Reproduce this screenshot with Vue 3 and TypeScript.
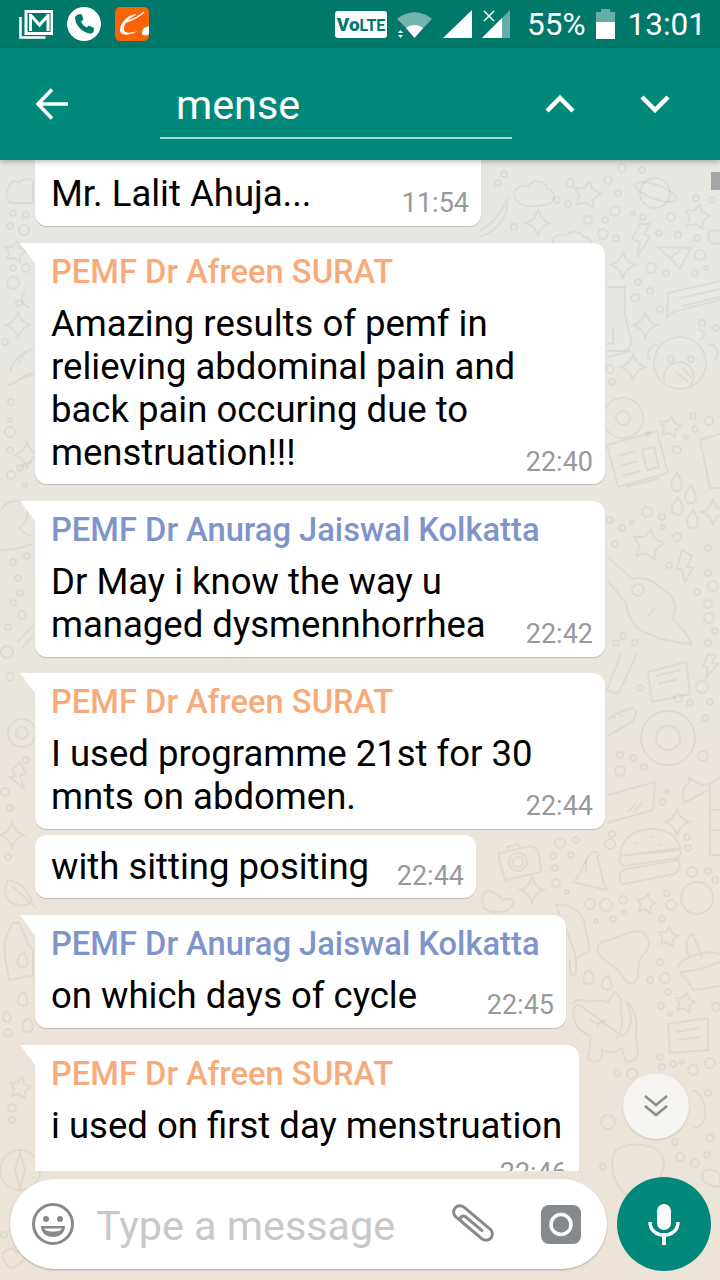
<script setup lang="ts">
interface Message {
  sender?: 'afreen' | 'anurag'
  text: string[]
  time: string
  width: number
  tail?: boolean
  cut?: boolean
  stacked?: boolean
}

const names = {
  afreen: 'PEMF Dr Afreen SURAT',
  anurag: 'PEMF Dr Anurag Jaiswal Kolkatta',
}

const messages: Message[] = [
  { text: ['Mr. Lalit Ahuja...'], time: '11:54', width: 446, cut: true },
  {
    sender: 'afreen',
    text: ['Amazing results of pemf in', 'relieving abdominal pain and', 'back pain occuring due to', 'menstruation!!!'],
    time: '22:40',
    width: 570,
    tail: true,
  },
  {
    sender: 'anurag',
    text: ['Dr May i know the way u', 'managed dysmennhorrhea'],
    time: '22:42',
    width: 570,
    tail: true,
  },
  {
    sender: 'afreen',
    text: ['I used programme 21st for 30', 'mnts on abdomen.'],
    time: '22:44',
    width: 570,
    tail: true,
  },
  { text: ['with sitting positing'], time: '22:44', width: 441 },
  { sender: 'anurag', text: ['on which days of cycle'], time: '22:45', width: 531, tail: true },
  { sender: 'afreen', text: ['i used on first day menstruation'], time: '22:46', width: 544, tail: true, stacked: true },
]

// wallpaper doodles: [x, y, r]
const dots = [
  [622, 168, 4], [642, 170, 3], [504, 174, 3], [498, 183, 3], [570, 183, 4], [608, 180, 4], [618, 193, 3], [557, 200, 3],
  [568, 204, 3], [615, 211, 5], [633, 213, 2], [643, 217, 3], [588, 220, 4], [605, 220, 3], [671, 217, 4], [696, 198, 3],
  [712, 200, 3], [514, 227, 3], [603, 234, 5], [616, 238, 3], [659, 233, 3], [678, 235, 3], [697, 238, 3], [715, 237, 7],
  [700, 255, 5], [651, 268, 5], [666, 273, 3], [695, 273, 3], [706, 268, 2], [638, 282, 3], [650, 291, 3], [635, 298, 4],
  [660, 309, 3], [702, 323, 3], [716, 328, 3], [610, 369, 4], [612, 382, 3], [709, 421, 4], [693, 416, 3], [695, 429, 3],
  [686, 437, 2], [648, 434, 2], [677, 450, 4], [647, 512, 5], [662, 517, 3], [663, 527, 2], [622, 528, 3], [632, 522, 2],
  [610, 520, 3], [615, 544, 3], [677, 537, 4], [708, 548, 3], [669, 565, 3], [708, 573, 3], [713, 586, 5], [697, 592, 3],
  [708, 604, 4], [709, 618, 5], [715, 631, 3], [708, 643, 3], [623, 636, 3], [635, 643, 3], [616, 643, 3], [678, 698, 4],
  [690, 703, 3], [702, 687, 6], [710, 702, 3], [640, 688, 3], [705, 718, 3], [620, 755, 3], [633, 758, 3], [620, 771, 5],
  [644, 767, 3], [663, 802, 3], [667, 792, 2], [703, 756, 5], [560, 843, 5], [576, 840, 3], [610, 844, 5], [612, 834, 3],
  [553, 856, 3], [571, 855, 3], [555, 868, 3], [556, 883, 4], [567, 892, 2], [590, 904, 5], [606, 905, 6], [623, 900, 4],
  [624, 912, 2], [596, 921, 2], [613, 919, 3], [692, 872, 5], [708, 871, 3], [715, 880, 3], [687, 837, 3], [688, 848, 3],
  [667, 893, 3], [671, 905, 5], [662, 919, 3], [660, 962, 3], [650, 980, 3], [665, 978, 5], [668, 992, 3], [661, 1006, 3],
  [670, 1014, 2], [716, 1007, 4], [660, 1057, 3], [662, 1067, 3], [673, 1064, 3], [682, 1062, 2], [710, 1063, 5],
  [693, 1070, 5], [617, 1073, 3], [632, 1074, 5], [708, 1093, 3], [608, 1122, 7], [680, 1157, 4], [695, 1163, 4],
  [707, 1155, 3], [675, 1142, 3], [710, 1138, 4], [603, 1167, 3], [13, 213, 3], [26, 215, 3], [10, 226, 3], [24, 230, 5],
  [13, 268, 3], [26, 268, 4], [13, 283, 6], [19, 303, 3], [5, 342, 3], [11, 402, 3], [10, 420, 2], [10, 432, 5], [10, 450, 3],
  [11, 475, 4], [20, 468, 3], [25, 485, 2], [13, 562, 3], [27, 556, 3], [18, 578, 3], [20, 593, 3], [13, 603, 3], [22, 615, 4],
  [8, 627, 3], [7, 652, 6], [10, 677, 4], [26, 760, 3], [5, 792, 4], [10, 808, 3], [8, 857, 3], [8, 1033, 4], [12, 1108, 4],
  [12, 1120, 3], [4, 1235, 3],
]

const bigStars = [
  [587, 195, 14], [697, 217, 13], [670, 427, 11], [648, 545, 16], [646, 904, 10], [668, 937, 10], [685, 1003, 10], [15, 252, 11], [20, 1088, 11],
]

const sparkles = [
  [538, 223], [623, 265], [645, 325], [633, 367], [713, 512], [677, 822], [532, 890], [18, 325], [27, 455], [12, 835],
]

const shapes = [
  'M516 200c-6-10 5-17 12-13 5-9 18-7 19 2 9 1 9 13 1 15-10 3-27 4-32-4Z',
  'M553 243c0-8 8-10 13-7 4-6 16-5 17 1 6 0 8 4 8 6',
  'M507 198c-4 14-14 26-27 32M507 198c2 18-8 32-27 39',
  'M640 224h10l-6 10 6 3-13 20 3-15-8-3Z',
  'M658 247l33 1-11 21-10-11ZM670 258l11-8',
  'M668 293l52-12M668 293l-1 24 6-5 47-12M680 298l40-9M682 306l38-9',
  'M607 287h18v28l6 24c1 8-4 12-8 12h-16M607 357l24-6M607 344h6v-16',
  'M700 340c8-6 2-12-2-10M650 360c-6-6 2-18 8-14M708 345c6-4 14 8 6 16',
  'M664 380c-2-14 14-22 22-16 8 4 10 14 4 22M676 372l12 10M682 368l10 10',
  'M607 445l50-14 11 42-50 14ZM618 456l18-5M620 466l18-5M622 476l18-5M642 450l12-3 5 20-12 3ZM626 487l34-9',
  'M700 440l20-6M700 440l10 48h10',
  'M673 479c-4 6-2 12 4 12s7-7 0-18ZM687 491c-4 6-2 12 4 12s7-7 0-18ZM674 503c-4 6-2 12 4 12s7-7 0-18ZM689 516c-4 6-2 12 4 12s7-7 0-18Z',
  'M682 550l10 6-5 11 6 1-8 14-3-12-5-2Z',
  'M608 557l24 22c10-4 22 2 30 10 14 8 16 20 10 30 6 4 14 12 20 26-14-4-32-4-40-10-18-4-24-20-26-32l-18-22M655 608l-7 8',
  'M607 690l14-37M618 694l19-40M607 690l11 4',
  'M648 672l38-10 4 32-38 8ZM656 676l24-6M658 684l20-5',
  'M708 654l8 1-4 8 6 1-12 14 2-10-5-2Z',
  'M607 720c8-6 18-10 26-12 6 4 2 12-4 16l-22 12M613 718l3-1M620 716l3-1',
  'M607 795l48-13-2 28-46 13M628 812l8-9M634 812l7-9',
  'M720 777c-10 6-12 14-32 0 6 6-8 10-4 14-4 4 2 8 0 12l26-14M710 785v70h10M710 810h10M710 830h10',
  'M620 856c0-34 58-36 60-6ZM620 856l60-8c2 4 0 8-2 10l-54 8c-4-2-6-6-4-10ZM622 870l56-10c4 8 0 12-4 14l-50 10c-4 0-6-8-2-14ZM634 844l2-2M650 838l2-2M660 846l2-2',
  'M499 853l31-7c4 0 8 4 9 8l2 18-36 8c-2-8-8-24-6-27ZM508 850l-1-3 11-3 2 3',
  'M592 852c6-2 8 4 5 6 4 8 4 22 10 32l-34-8c10-8 10-22 19-30Z',
  'M586 860v12',
  'M484 908c-4-10 0-16 4-18 6 2 12 6 14 10 4-2 10-2 12 2-2 6-8 10-14 10-6 0-12 0-16-4Z',
  'M556 905c14-2 24 6 28 16l6 30-14 7c-4-18-14-36-20-53ZM570 960v12c0 4 6 4 6 0v-14',
  'M602 942c14-2 28-14 40-10 10 6 8 18 0 24-4 4-4 14-4 20-2 8-10 10-14 2-6-10-12-12-22-20-6-6-6-12 0-16Z',
  'M586 972c-4 6-3 12 3 12s6-6 1-14ZM604 978c-4 6-3 12 3 12s6-6 1-14Z',
  'M692 933l10 24M692 933c-8 8-6 18-2 24M678 968c0-8 12-10 14-12 8-2 14-6 28-2M680 972l14 18 26-4M680 972c14 0 26-4 40-10',
  'M572 1004c4-6 14-4 14-2 6-2 16-2 22 0l6-10c8 4 8 12 6 18 4 10 2 22-4 30M622 1036c10-6 12-20 4-34 6 2 12 16 10 32l2 20c-4 10-14 10-14 2l-2-8c-6 4-14 6-20 2v6c0 6-12 8-14 2 0-6 4-12 2-22-8-4-14-8-16-18-2-6 0-12 4-14Z',
  'M590 1020l8 4 8-4M598 1024v4',
  'M668 1024l40-6v32l-38 3ZM676 1032l24-4M677 1040l24-3',
  'M616 1150c12-8 28-6 38-2 10 6 12 14 8 24-4 8-2 18-10 24-12 6-30 0-36-14-4-10-6-24 0-32Z',
  'M693 1090c8 4 14 14 12 28-2 6-6 10-12 10',
  'M703 1172c6-4 14-2 17 2v13c-8 0-16-4-18-8Z',
  'M9 188c0-6 6-8 10-5 3-5 14-6 14 0v20H11c-6-3-6-12-2-15Z',
  'M26 293c-6 0-6 14 4 14',
  'M18 365c4-8 6-14 15-16M10 372c4-14 12-20 23-23M7 385c10 0 12-10 26-12M18 380l15-5',
  'M20 470c2-6 8-8 13-8',
  'M1 510c8-12 22-12 26 0 2 10-4 16-8 18 4 4 8 8 14 8M1 550c10 0 20-2 32-6',
  'M17 643l16-18M22 648l11-12',
  'M12 770l8-8 6 12-6 1 4 14-14-12 6-1Z',
  'M8 880c10 2 18 6 24 22-8 6-22 4-26-6-2-6 0-12 2-16ZM12 886l24 22',
  'M12 924c2-2 6-2 8 0l8 20 5 6v26h-4l-20 4c-2-14-6-28-4-40ZM20 955c-4 6-3 12 3 12s6-6 1-14Z',
  'M20 994c-4 6-3 12 3 12s6-6 1-14ZM25 1020c-4 6-3 12 3 12s6-6 1-14ZM5 1012c-4 4-2 10 2 10s5-5 1-10Z',
  'M4 1252c4-4 10-4 12 0 6-2 12 2 8 8-4 4-10 8-14 8-4-4-10-10-6-16Z',
  'M20 1152l5 18-5 18-5-18Z',
]

const rings = [
  [623, 418, 20], [623, 418, 7], [668, 738, 27], [668, 738, 12], [680, 363, 26], [671, 359, 3], [691, 359, 3],
  [638, 590, 6], [518, 862, 9], [518, 862, 5], [697, 898, 16], [20, 1170, 20], [22, 733, 14], [22, 733, 6],
]

const starPath = (x: number, y: number, r: number): string => {
  const points: string[] = []
  for (let i = 0; i < 10; i++) {
    const len = i % 2 ? r * 0.55 : r
    const a = (Math.PI / 5) * i - Math.PI / 2 + 0.2
    points.push(`${(x + Math.cos(a) * len).toFixed(1)} ${(y + Math.sin(a) * len).toFixed(1)}`)
  }
  return `M${points.join('L')}Z`
}
</script>

<template>
  <div class="phone">
    <svg class="doodles" width="720" height="1120" viewBox="0 160 720 1120" fill="none" stroke="#000" stroke-opacity=".05" stroke-width="2">
      <circle v-for="(d, i) in dots" :key="i" :cx="d[0]" :cy="d[1]" :r="d[2]" />
      <circle v-for="(d, i) in rings" :key="'r' + i" :cx="d[0]" :cy="d[1]" :r="d[2]" />
      <path v-for="(s, i) in bigStars" :key="'b' + i" :d="starPath(s[0], s[1], s[2])" />
      <path v-for="(s, i) in sparkles" :key="'s' + i" :transform="`translate(${s[0]} ${s[1]})`" d="M0-14Q2-3 12 0Q2 3 0 14Q-2 3-12 0Q-2-3 0-14Z" />
      <path v-for="(d, i) in shapes" :key="'p' + i" :d="d" />
      <circle cx="655" cy="193" r="15" />
      <ellipse cx="656" cy="192" rx="22" ry="7" transform="rotate(20 656 192)" />
    </svg>

    <header class="status-bar">
      <div class="status-left">
        <svg width="34" height="30" viewBox="0 0 34 30">
          <path d="M7 2.500h26v22H7Z" fill="none" stroke="#fff" stroke-width="3" />
          <path d="M11.500 5v17M29 5v17M11.500 6l9 10 9-10" fill="none" stroke="#fff" stroke-width="3" />
          <path d="M1.500 8v20.500h25" fill="none" stroke="#fff" stroke-width="2.500" />
        </svg>
        <svg width="34" height="34" viewBox="0 0 34 34">
          <circle cx="17" cy="17" r="17" fill="#fff" />
          <path d="M11 7.500l3.500-.5 2 5.500-2.500 2c1 2.500 3 4.500 5.500 6l2.500-2 5 2.500-.5 3.500c-.5 1.500-2.500 2.500-4 2C15 25 8.500 18.500 8 11c0-1.500 1.500-3 3-3.500Z" fill="#00786a" />
        </svg>
        <svg width="34" height="34" viewBox="0 0 34 34">
          <rect width="34" height="34" rx="5" fill="#fb6307" />
          <path d="M20 7C12 9 5 16 5 23c0 6 9 6 18 1-7 2-13 3-14-1-1-5 4-11 12-15Z" fill="#fff" />
          <path d="M11 15c6-2 13-5 18-10" fill="none" stroke="#fff" stroke-width="1.500" />
          <path d="M29 21c-2 3-3 6-1 7 3 1 5 0 6-1v-8Z" fill="#fff" />
        </svg>
      </div>
      <div class="status-right">
        <span class="volte"><b>Vo</b>LTE</span>
        <svg width="35" height="29" viewBox="0 0 35 29">
          <path d="M0 9C10 0 25 0 35 9L18 27Z" fill="#fff" opacity=".45" />
          <path d="M9 18c5-4 12-4 17 0l-8.500 10Z" fill="#fff" />
          <path d="M1 23l2.500-3 2.500 3ZM1 25l2.500 3 2.500-3Z" fill="#fff" />
        </svg>
        <svg class="signal" width="29" height="28" viewBox="0 0 29 28"><path d="M29 0v28H0Z" fill="#fff" /></svg>
        <svg class="signal" width="28" height="28" viewBox="0 0 28 28">
          <path d="M28 0v28H0Z" fill="#fff" opacity=".4" />
          <path d="M20 8v20H0Z" fill="#fff" />
          <path d="M2 1l10 10M12 1L2 11" stroke="#fff" stroke-width="1.500" />
        </svg>
        <span class="battery-text">55%</span>
        <svg class="battery" width="19" height="30" viewBox="0 0 19 30">
          <path d="M5 0h9v3h5v27H0V3h5Z" fill="#fff" opacity=".4" />
          <path d="M0 13h19v17H0Z" fill="#fff" />
        </svg>
        <span class="clock">13:01</span>
      </div>
    </header>

    <div class="toolbar">
      <svg class="back" width="32" height="32" viewBox="0 0 32 32" fill="none" stroke="#fff" stroke-width="3.500">
        <path d="M32 16H3M16 1.500 2 16l14 14.500" />
      </svg>
      <div class="search">mense</div>
      <svg class="chev" width="30" height="18" viewBox="0 0 30 18" fill="none" stroke="#fff" stroke-width="4.500"><path d="M2 16 15 3l13 13" /></svg>
      <svg class="chev down" width="30" height="18" viewBox="0 0 30 18" fill="none" stroke="#fff" stroke-width="4.500"><path d="M2 2l13 13L28 2" /></svg>
    </div>

    <main class="chat">
      <div
        v-for="(m, i) in messages"
        :key="i"
        class="bubble"
        :class="{ tail: m.tail, cut: m.cut }"
        :style="{ width: m.width + 'px' }"
      >
        <div v-if="m.sender" class="sender" :class="m.sender">{{ names[m.sender] }}</div>
        <div class="body" :class="{ stacked: m.stacked }">
          <div class="text">
            <div v-for="line in m.text" :key="line">{{ line }}</div>
          </div>
          <span class="time">{{ m.time }}</span>
        </div>
      </div>
    </main>

    <div class="scrollbar"></div>
    <button class="to-bottom">
      <svg width="24" height="24" viewBox="0 0 24 24" fill="none" stroke="#8b8f8d" stroke-width="2.600">
        <path d="M1 2l11 9 11-9M1 12l11 9 11-9" />
      </svg>
    </button>

    <footer class="composer">
      <div class="input">
        <svg width="44" height="44" viewBox="0 0 44 44">
          <circle cx="22" cy="22" r="19.500" fill="none" stroke="#868a8d" stroke-width="3" />
          <circle cx="15" cy="17" r="3" fill="#868a8d" />
          <circle cx="29" cy="17" r="3" fill="#868a8d" />
          <path d="M10 24h24c0 7-5 11-12 11s-12-4-12-11Z" fill="#868a8d" />
          <path d="M13 26.500h18c-1 2-3 3-9 3s-8-1-9-3Z" fill="#fff" />
        </svg>
        <span class="placeholder">Type a message</span>
        <svg width="44" height="42" viewBox="0 0 44 42" fill="none" stroke="#868a8d" stroke-width="3.300" stroke-linecap="round">
          <g transform="translate(22 20) rotate(40) scale(.9)">
            <path d="M12 7H-19a7 7 0 0 1 0-14H19a7 7 0 0 1 0 14H-11a3.500 3.500 0 0 1 0-7H13" />
          </g>
        </svg>
        <svg class="camera" width="40" height="39" viewBox="0 0 40 39">
          <rect width="40" height="39" rx="8" fill="#868a8d" />
          <circle cx="20" cy="19.500" r="10" fill="none" stroke="#fff" stroke-width="3.500" />
        </svg>
      </div>
      <div class="mic">
        <svg width="32" height="42" viewBox="0 0 32 42">
          <rect x="9" y="1" width="14" height="26" rx="7" fill="#fff" />
          <path d="M2 19c0 8 6 13 14 13s14-5 14-13" fill="none" stroke="#fff" stroke-width="3.500" />
          <path d="M16 32v10" stroke="#fff" stroke-width="4" />
        </svg>
      </div>
    </footer>
  </div>
</template>

<style>
html, body { margin: 0; }
</style>

<style scoped>
.phone {
  position: relative;
  display: flex;
  flex-direction: column;
  width: 720px;
  height: 1280px;
  overflow: hidden;
  background: linear-gradient(#e7e7e2 160px, #ede3d7);
  font-family: Roboto, sans-serif;
}

.doodles {
  position: absolute;
  left: 0;
  top: 160px;
}

.status-bar {
  position: relative;
  display: flex;
  justify-content: space-between;
  align-items: center;
  height: 48px;
  flex-shrink: 0;
  padding: 0 14px 0 19px;
  box-sizing: border-box;
  background: #00786a;
  color: #fff;
}

.status-left,
.status-right {
  display: flex;
  align-items: center;
}

.status-left { gap: 14px; }

.volte {
  width: 52px;
  height: 27px;
  margin-right: 10px;
  border-radius: 3px;
  background: #fff;
  color: #00786a;
  font-size: 16px;
  font-weight: 700;
  line-height: 27px;
  text-align: center;
}

.volte b { font-size: 19px; }

.signal { margin-left: 11px; }

.signal + .signal { margin-left: 10px; }

.battery-text {
  margin-left: 17px;
  font-size: 31.500px;
}

.battery { margin-left: 10px; }

.clock {
  margin-left: 13px;
  font-size: 31.500px;
}

.toolbar {
  position: relative;
  z-index: 2;
  display: flex;
  align-items: center;
  height: 112px;
  flex-shrink: 0;
  box-sizing: border-box;
  padding-left: 36px;
  background: #00897b;
  box-shadow: 0 2px 5px rgba(0, 0, 0, .25);
}

.search {
  align-self: flex-start;
  width: 352px;
  height: 91px;
  margin-left: 92px;
  box-sizing: border-box;
  padding: 33px 0 0 16px;
  border-bottom: 2px solid #a5dcd4;
  color: #fff;
  font-size: 41.300px;
  line-height: 48px;
}

.chev { margin-left: 33px; }

.chev.down { margin-left: 65px; }

.chat {
  position: relative;
  display: flex;
  flex-direction: column;
  gap: 16px;
  height: 1011px;
  flex-shrink: 0;
  overflow: hidden;
  padding-left: 35px;
}

.bubble {
  position: relative;
  flex-shrink: 0;
  box-sizing: border-box;
  padding: 10px 12px 11px 16px;
  border-radius: 12px;
  background: #fff;
  box-shadow: 0 1px 1px rgba(0, 0, 0, .18);
}

.bubble.cut {
  height: 66px;
  padding-top: 12px;
  border-radius: 0 0 12px 12px;
}

.bubble.tail { border-top-left-radius: 0; }

.bubble.tail::before {
  content: "";
  position: absolute;
  left: -15px;
  top: 0;
  border-top: 20px solid #fff;
  border-left: 15px solid transparent;
}

.bubble:nth-child(2) {
  margin-top: 1px;
  padding-bottom: 10px;
}

.bubble:nth-child(3) { margin-top: 1px; }

.bubble:nth-child(5) {
  margin-top: -10px;
  padding-bottom: 10px;
}

.bubble:nth-child(6),
.bubble:nth-child(7) { margin-top: 1px; }

.sender {
  height: 49px;
  font-size: 32.700px;
  font-weight: 500;
  line-height: 38px;
  white-space: nowrap;
}

.afreen { color: #f8ab7a; }

.anurag { color: #7e94cb; }

.body {
  display: flex;
  justify-content: space-between;
  align-items: flex-end;
}

.body.stacked {
  flex-direction: column;
}

.body.stacked .text { align-self: flex-start; }

.body.stacked .time { margin-top: 12px; }

.text {
  min-width: 0;
  color: #000;
  font-size: 36.500px;
  line-height: 43px;
  white-space: nowrap;
}

.time {
  flex-shrink: 0;
  margin-bottom: -2px;
  color: #999;
  font-size: 27px;
  line-height: 28px;
  white-space: nowrap;
}

.scrollbar {
  position: absolute;
  right: 0;
  top: 172px;
  width: 9px;
  height: 18px;
  background: #a5a5a5;
}

.to-bottom {
  position: absolute;
  left: 623px;
  top: 1073px;
  display: flex;
  align-items: center;
  justify-content: center;
  width: 66px;
  height: 66px;
  padding: 0;
  border: 0;
  border-radius: 50%;
  background: #f5f4f1;
  box-shadow: 0 1px 2px rgba(0, 0, 0, .15);
}

.composer {
  position: relative;
  display: flex;
  align-items: center;
  gap: 10px;
  height: 109px;
  box-sizing: border-box;
  padding: 0 0 3px 10px;
}

.input {
  display: flex;
  align-items: center;
  width: 597px;
  height: 90px;
  box-sizing: border-box;
  padding: 0 26px 0 21px;
  border-radius: 45px;
  background: #fff;
  box-shadow: 0 1px 2px rgba(0, 0, 0, .25);
}

.placeholder {
  flex: 1;
  margin: 3px 0 0 21px;
  color: #c8c8c8;
  font-size: 41.300px;
}

.camera { margin-left: 46px; }

.mic {
  display: flex;
  align-items: center;
  justify-content: center;
  width: 94px;
  height: 94px;
  border-radius: 50%;
  background: #00897b;
}
</style>
